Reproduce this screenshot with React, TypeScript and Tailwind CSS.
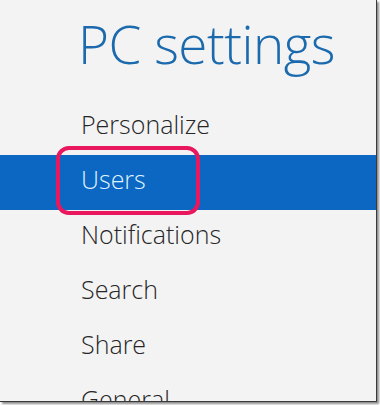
const items = ['Personalize', 'Users', 'Notifications', 'Search', 'Share', 'General'];

export default function App() {
  return (
    <div className="w-[380px] h-[405px] bg-white overflow-hidden">
      <div
        className="relative w-[377px] h-[402px] bg-[#f3f3f3] border-r border-b border-[#3a3a3a] shadow-[2px_2px_2px_rgba(0,0,0,0.45)] overflow-hidden"
        style={{ fontFamily: '"Open Sans", "Noto Sans", sans-serif' }}
      >
        <div className="h-[100px] pl-[78px] pt-[12px]">
          <h1 className="text-[53px] leading-[64px] font-light text-[#1b6aae] tracking-[-0.5px] whitespace-nowrap">
            PC settings
          </h1>
        </div>
        <ul>
          {items.map((item) => {
            const active = item === 'Users';
            return (
              <li
                key={item}
                className={
                  active
                    ? 'relative h-[55px] pl-[81px] text-[25px] leading-[49px] font-light bg-[#0b67c1] text-[#dff2ff]'
                    : 'relative h-[55px] pl-[81px] text-[25px] leading-[49px] font-light text-[#262626]'
                }
              >
                {item}
                {active && (
                  <span className="absolute left-[56px] top-[-9px] w-[144px] h-[69px] rounded-[13px] border-[4px] border-[#e8175e]" />
                )}
              </li>
            );
          })}
        </ul>
      </div>
    </div>
  );
}
